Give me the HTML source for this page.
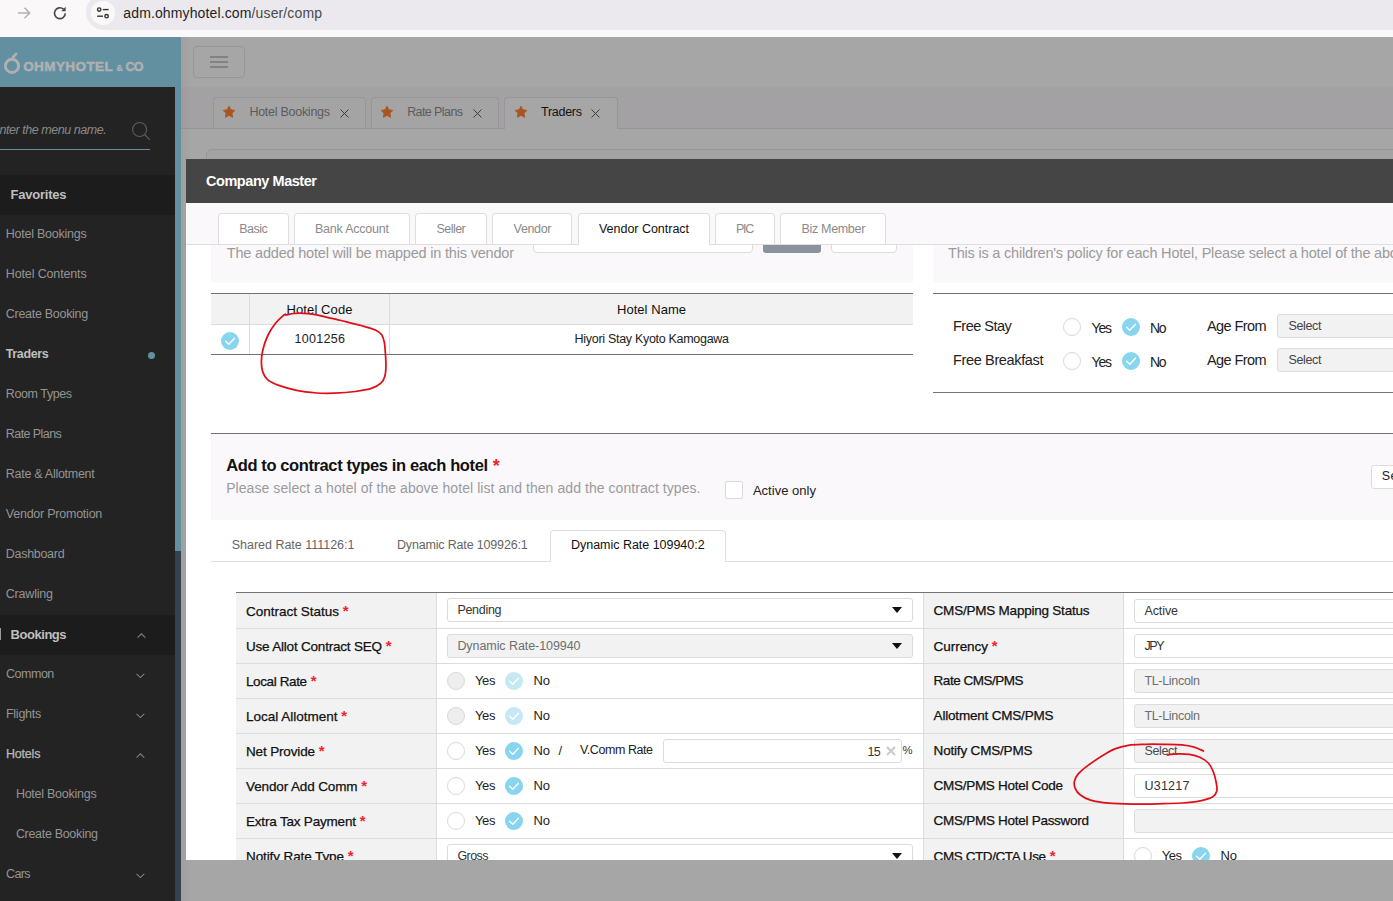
<!DOCTYPE html>
<html lang="en"><head><meta charset="utf-8"><title>Company Master</title>
<style>
html,body{margin:0;padding:0;}
body{width:1393px;height:901px;overflow:hidden;position:relative;background:#a6a6a6;font-family:"Liberation Sans",sans-serif;}
.b{position:absolute;box-sizing:border-box;}
.t{position:absolute;white-space:nowrap;}
svg{position:absolute;overflow:visible;}
</style></head><body>
<div class="b" style="left:181px;top:37px;width:1212px;height:50px;background:#a6a6a6;"></div>
<div class="b" style="left:181px;top:87px;width:1212px;height:41px;background:#a3a1a3;"></div>
<div class="b" style="left:181px;top:128px;width:1212px;height:1px;background:#979597;"></div>
<div class="b" style="left:181px;top:129px;width:1212px;height:772px;background:#a6a6a6;"></div>
<div class="b" style="left:181px;top:37px;width:11px;height:864px;background:linear-gradient(90deg,rgba(0,0,0,.04),rgba(0,0,0,0));"></div>
<div class="b" style="left:193px;top:46px;width:52px;height:32px;border:1px solid #969696;border-radius:4px;"></div>
<div class="b" style="left:210px;top:56px;width:18px;height:2px;background:#828282;"></div>
<div class="b" style="left:210px;top:61px;width:18px;height:2px;background:#828282;"></div>
<div class="b" style="left:210px;top:66px;width:18px;height:2px;background:#828282;"></div>
<div class="b" style="left:213px;top:97px;width:153px;height:31px;background:#a5a4a5;border:1px solid #979597;border-radius:4px 4px 0 0;border-bottom:none;"></div>
<svg style="left:222.29999999999998px;top:105px" width="14" height="14" viewBox="0 0 24 24"><path d="M12 2l3.09 6.26L22 9.27l-5 4.87 1.18 6.88L12 17.77l-6.18 3.25L7 14.14 2 9.27l6.91-1.01z" fill="#a8561f" stroke="#a8561f" stroke-width="1.6" stroke-linejoin="round"/></svg>
<span class="t" style="top:101.8px;font-size:12.5px;line-height:20px;color:#5b5b5b;left:249.4px;letter-spacing:-0.267px;">Hotel Bookings</span>
<svg style="left:339.5px;top:108.500px" width="9" height="9" viewBox="0 0 9 9"><path d="M0.500 0.500L8.500 8.500M8.500 0.500L0.500 8.500" stroke="#3d3d3d" stroke-width="1" fill="none"/></svg>
<div class="b" style="left:371px;top:97px;width:128px;height:31px;background:#a5a4a5;border:1px solid #979597;border-radius:4px 4px 0 0;border-bottom:none;"></div>
<svg style="left:380.2px;top:105px" width="14" height="14" viewBox="0 0 24 24"><path d="M12 2l3.09 6.26L22 9.27l-5 4.87 1.18 6.88L12 17.77l-6.18 3.25L7 14.14 2 9.27l6.91-1.01z" fill="#a8561f" stroke="#a8561f" stroke-width="1.6" stroke-linejoin="round"/></svg>
<span class="t" style="top:101.8px;font-size:12.5px;line-height:20px;color:#5b5b5b;left:407.2px;letter-spacing:-0.594px;">Rate Plans</span>
<svg style="left:472.5px;top:108.500px" width="9" height="9" viewBox="0 0 9 9"><path d="M0.500 0.500L8.500 8.500M8.500 0.500L0.500 8.500" stroke="#3d3d3d" stroke-width="1" fill="none"/></svg>
<div class="b" style="left:504px;top:97px;width:114px;height:32px;background:#a6a6a6;border:1px solid #979597;border-radius:4px 4px 0 0;border-bottom:none;"></div>
<svg style="left:513.5px;top:105px" width="14" height="14" viewBox="0 0 24 24"><path d="M12 2l3.09 6.26L22 9.27l-5 4.87 1.18 6.88L12 17.77l-6.18 3.25L7 14.14 2 9.27l6.91-1.01z" fill="#a8561f" stroke="#a8561f" stroke-width="1.6" stroke-linejoin="round"/></svg>
<span class="t" style="top:101.8px;font-size:12.5px;line-height:20px;color:#111;left:541.0px;letter-spacing:-0.267px;">Traders</span>
<svg style="left:591.3px;top:108.500px" width="9" height="9" viewBox="0 0 9 9"><path d="M0.500 0.500L8.500 8.500M8.500 0.500L0.500 8.500" stroke="#3d3d3d" stroke-width="1" fill="none"/></svg>
<div class="b" style="left:206px;top:149px;width:1294px;height:51px;background:#a4a2a4;border:1px solid #979597;border-radius:6px;"></div>
<div class="b" style="left:0px;top:0px;width:1393px;height:37px;background:#fbf8fa;"></div>
<div class="b" style="left:86px;top:-6px;width:1414px;height:36px;background:#ebe9ee;border-radius:18px;"></div>
<div class="b" style="left:91px;top:1px;width:23.5px;height:23.5px;background:#fbf8fa;border-radius:50%;"></div>
<svg style="left:17px;top:6px" width="14" height="14" viewBox="0 0 14 14"><path d="M1 7H12.500M7.500 1.800L12.700 7L7.500 12.200" stroke="#b3b1b4" stroke-width="1.500" fill="none"/></svg>
<svg style="left:52px;top:5px" width="16" height="16" viewBox="0 0 16 16"><path d="M13.300 8.400A5.400 5.400 0 1 1 11.500 4.200" stroke="#474747" stroke-width="1.600" fill="none"/><path d="M13.600 1.800V6.200H9.200z" fill="#474747"/></svg>
<svg style="left:96px;top:6px" width="14" height="14" viewBox="0 0 14 14"><circle cx="3.200" cy="3.600" r="1.700" stroke="#333" stroke-width="1.400" fill="none"/><path d="M6.800 3.600H12.600" stroke="#333" stroke-width="1.400"/><circle cx="10.600" cy="10.200" r="1.700" stroke="#333" stroke-width="1.400" fill="none"/><path d="M1.200 10.200H7" stroke="#333" stroke-width="1.400"/></svg>
<span class="t" style="top:2.2px;font-size:14px;line-height:22px;color:#1f1f1f;left:123.3px;letter-spacing:0.130px;">adm.ohmyhotel.com<span style="color:#4a4a4a">/user/comp</span></span>
<div class="b" style="left:0px;top:37px;width:181px;height:864px;background:#6290a1;"></div>
<div class="b" style="left:175px;top:551px;width:6px;height:350px;background:#33434b;"></div>
<div class="b" style="left:0px;top:87px;width:175px;height:814px;background:#232323;"></div>
<div class="b" style="left:0px;top:175px;width:175px;height:40px;background:#1c1c1c;"></div>
<div class="b" style="left:0px;top:615px;width:175px;height:40px;background:#1c1c1c;"></div>
<div class="b" style="left:0px;top:627.5px;width:1px;height:12.0px;background:#9a9a9a;"></div>
<svg style="left:0px;top:48px" width="30" height="30" viewBox="0 0 30 30"><circle cx="12" cy="17.900" r="6.600" stroke="#b1b0b1" stroke-width="2.900" fill="none"/><path d="M12.500 11.300C12.900 9.200 14 7.400 16.200 5.900" stroke="#b1b0b1" stroke-width="2.700" fill="none" stroke-linecap="round"/></svg>
<span class="t" style="top:55.6px;font-size:13.5px;line-height:22px;color:#b1b0b1;left:23.2px;letter-spacing:0.419px;font-weight:bold;-webkit-text-stroke:0.500px #b1b0b1;">OHMYHOTEL</span>
<span class="t" style="top:60.5px;font-size:9px;line-height:14px;color:#b1b0b1;left:116.2px;letter-spacing:-0.100px;font-weight:bold;-webkit-text-stroke:0.300px #b1b0b1;">&amp;</span>
<span class="t" style="top:56.6px;font-size:12.5px;line-height:20px;color:#b1b0b1;left:125.4px;letter-spacing:-0.750px;font-weight:bold;-webkit-text-stroke:0.500px #b1b0b1;">CO</span>
<span class="t" style="top:120.3px;font-size:12.5px;line-height:20px;color:#8a8a8a;left:-8.4px;font-style:italic;letter-spacing:-0.446px;">Enter the menu name.</span>
<div class="b" style="left:0px;top:149px;width:150px;height:1px;background:#6290a1;"></div>
<svg style="left:130px;top:120px" width="22" height="22" viewBox="0 0 22 22"><circle cx="9.600" cy="9.500" r="7" stroke="#5e5e5e" stroke-width="1.100" fill="none"/><path d="M14.600 14.500L20 19.900" stroke="#5e5e5e" stroke-width="1.100"/></svg>
<span class="t" style="top:184.2px;font-size:13px;line-height:21px;color:#bfbfbf;left:10.5px;letter-spacing:-0.213px;font-weight:bold;">Favorites</span>
<span class="t" style="top:224.0px;font-size:12.5px;line-height:20px;color:#959595;left:5.8px;letter-spacing:-0.244px;">Hotel Bookings</span>
<span class="t" style="top:264.0px;font-size:12.5px;line-height:20px;color:#959595;left:5.8px;letter-spacing:-0.137px;">Hotel Contents</span>
<span class="t" style="top:304.0px;font-size:12.5px;line-height:20px;color:#959595;left:5.8px;letter-spacing:-0.289px;">Create Booking</span>
<span class="t" style="top:344.0px;font-size:12.5px;line-height:20px;color:#bfbfbf;left:5.8px;letter-spacing:-0.377px;font-weight:bold;">Traders</span>
<span class="t" style="top:384.0px;font-size:12.5px;line-height:20px;color:#959595;left:5.8px;letter-spacing:-0.404px;">Room Types</span>
<span class="t" style="top:424.0px;font-size:12.5px;line-height:20px;color:#959595;left:5.8px;letter-spacing:-0.571px;">Rate Plans</span>
<span class="t" style="top:464.0px;font-size:12.5px;line-height:20px;color:#959595;left:5.8px;letter-spacing:-0.280px;">Rate &amp; Allotment</span>
<span class="t" style="top:504.0px;font-size:12.5px;line-height:20px;color:#959595;left:5.8px;letter-spacing:-0.237px;">Vendor Promotion</span>
<span class="t" style="top:544.0px;font-size:12.5px;line-height:20px;color:#959595;left:5.8px;letter-spacing:-0.293px;">Dashboard</span>
<span class="t" style="top:584.0px;font-size:12.5px;line-height:20px;color:#959595;left:5.8px;letter-spacing:-0.204px;">Crawling</span>
<div class="b" style="left:148px;top:352px;width:7px;height:7px;background:#6290a1;border-radius:50%;"></div>
<span class="t" style="top:624.3px;font-size:13px;line-height:21px;color:#bfbfbf;left:10.5px;letter-spacing:-0.447px;font-weight:bold;">Bookings</span>
<svg style="left:136.6px;top:632.8px" width="8.800" height="5.400" viewBox="0 0 8.800 5.400"><path d="M0.500 4.600L4.400 0.800L8.300 4.600" stroke="#808080" stroke-width="1.100" fill="none"/></svg>
<span class="t" style="top:664.2px;font-size:12.5px;line-height:20px;color:#959595;left:6.0px;letter-spacing:-0.481px;">Common</span>
<svg style="left:136.29999999999998px;top:672.8px" width="8.800" height="5.400" viewBox="0 0 8.800 5.400"><path d="M0.500 0.800L4.400 4.600L8.300 0.800" stroke="#808080" stroke-width="1.100" fill="none"/></svg>
<span class="t" style="top:704.2px;font-size:12.5px;line-height:20px;color:#959595;left:6.0px;letter-spacing:-0.269px;">Flights</span>
<svg style="left:136.29999999999998px;top:712.8px" width="8.800" height="5.400" viewBox="0 0 8.800 5.400"><path d="M0.500 0.800L4.400 4.600L8.300 0.800" stroke="#808080" stroke-width="1.100" fill="none"/></svg>
<span class="t" style="top:744.2px;font-size:12.5px;line-height:20px;color:#b8b8b8;left:6.0px;letter-spacing:-0.206px;-webkit-text-stroke:0.250px #b8b8b8;">Hotels</span>
<svg style="left:136.29999999999998px;top:753.0999999999999px" width="8.800" height="5.400" viewBox="0 0 8.800 5.400"><path d="M0.500 4.600L4.400 0.800L8.300 4.600" stroke="#808080" stroke-width="1.100" fill="none"/></svg>
<span class="t" style="top:784.2px;font-size:12.5px;line-height:20px;color:#959595;left:15.9px;letter-spacing:-0.252px;">Hotel Bookings</span>
<span class="t" style="top:824.2px;font-size:12.5px;line-height:20px;color:#959595;left:15.9px;letter-spacing:-0.312px;">Create Booking</span>
<span class="t" style="top:864.2px;font-size:12.5px;line-height:20px;color:#959595;left:6.0px;letter-spacing:-0.597px;">Cars</span>
<svg style="left:136.29999999999998px;top:872.8px" width="8.800" height="5.400" viewBox="0 0 8.800 5.400"><path d="M0.500 0.800L4.400 4.600L8.300 0.800" stroke="#808080" stroke-width="1.100" fill="none"/></svg>
<div class="b" style="left:186px;top:159px;width:1207px;height:701px;background:#ffffff;"></div>
<div class="b" style="left:186px;top:159px;width:1207px;height:44px;background:#454545;"></div>
<span class="t" style="top:169.8px;font-size:14.5px;line-height:23px;color:#ffffff;left:206.0px;letter-spacing:-0.449px;font-weight:bold;">Company Master</span>
<div class="b" style="left:211px;top:244px;width:702px;height:39px;background:#faf8fb;"></div>
<div class="b" style="left:933px;top:244px;width:460px;height:39px;background:#faf8fb;"></div>
<span class="t" style="top:241.5px;font-size:14.5px;line-height:23px;color:#9b9b9b;left:226.8px;letter-spacing:-0.196px;">The added hotel will be mapped in this vendor</span>
<span class="t" style="top:241.5px;font-size:14.5px;line-height:23px;color:#9b9b9b;left:948.0px;letter-spacing:-0.196px;">This is a children's policy for each Hotel, Please select a hotel of the above hotel list.</span>
<div class="b" style="left:533px;top:236px;width:220px;height:17px;background:#fff;border:1px solid #dcdcdc;border-radius:4px;"></div>
<div class="b" style="left:763px;top:236px;width:58px;height:17px;background:#8a929c;border-radius:3px;"></div>
<div class="b" style="left:831px;top:236px;width:66px;height:17px;background:#fff;border:1px solid #dcdcdc;border-radius:4px;"></div>
<div class="b" style="left:186px;top:203px;width:1207px;height:42px;background:#faf8fb;border-bottom:1px solid #dedede;"></div>
<div class="b" style="left:218px;top:213px;width:71px;height:31px;background:#fff;border:1px solid #dedede;border-radius:4px 4px 0 0;border-bottom:none;"></div>
<span class="t" style="top:219.0px;font-size:12.5px;line-height:20px;color:#8a8a8a;left:239.3px;letter-spacing:-0.517px;">Basic</span>
<div class="b" style="left:294px;top:213px;width:116px;height:31px;background:#fff;border:1px solid #dedede;border-radius:4px 4px 0 0;border-bottom:none;"></div>
<span class="t" style="top:219.0px;font-size:12.5px;line-height:20px;color:#8a8a8a;left:315.0px;letter-spacing:-0.222px;">Bank Account</span>
<div class="b" style="left:415px;top:213px;width:72px;height:31px;background:#fff;border:1px solid #dedede;border-radius:4px 4px 0 0;border-bottom:none;"></div>
<span class="t" style="top:219.0px;font-size:12.5px;line-height:20px;color:#8a8a8a;left:436.6px;letter-spacing:-0.571px;">Seller</span>
<div class="b" style="left:492px;top:213px;width:80px;height:31px;background:#fff;border:1px solid #dedede;border-radius:4px 4px 0 0;border-bottom:none;"></div>
<span class="t" style="top:219.0px;font-size:12.5px;line-height:20px;color:#8a8a8a;left:513.6px;letter-spacing:-0.343px;">Vendor</span>
<div class="b" style="left:578px;top:213px;width:132px;height:32px;background:#fff;border:1px solid #dedede;border-radius:4px 4px 0 0;border-bottom:none;"></div>
<span class="t" style="top:219.0px;font-size:12.5px;line-height:20px;color:#111;left:599.0px;letter-spacing:-0.023px;">Vendor Contract</span>
<div class="b" style="left:715px;top:213px;width:60px;height:31px;background:#fff;border:1px solid #dedede;border-radius:4px 4px 0 0;border-bottom:none;"></div>
<span class="t" style="top:219.0px;font-size:12.5px;line-height:20px;color:#8a8a8a;left:736.0px;letter-spacing:-1.269px;">PIC</span>
<div class="b" style="left:780px;top:213px;width:106px;height:31px;background:#fff;border:1px solid #dedede;border-radius:4px 4px 0 0;border-bottom:none;"></div>
<span class="t" style="top:219.0px;font-size:12.5px;line-height:20px;color:#8a8a8a;left:801.5px;letter-spacing:-0.320px;">Biz Member</span>
<div class="b" style="left:211px;top:293px;width:702px;height:1px;background:#737373;"></div>
<div class="b" style="left:211px;top:294px;width:702px;height:30px;background:#f2f2f2;"></div>
<div class="b" style="left:211px;top:324px;width:702px;height:1px;background:#dcdcdc;"></div>
<div class="b" style="left:211px;top:354px;width:702px;height:1px;background:#737373;"></div>
<div class="b" style="left:249px;top:294px;width:1px;height:60px;background:#dcdcdc;"></div>
<div class="b" style="left:389px;top:294px;width:1px;height:60px;background:#dcdcdc;"></div>
<span class="t" style="top:298.8px;font-size:13px;line-height:21px;color:#111;left:286.5px;letter-spacing:0.107px;">Hotel Code</span>
<span class="t" style="top:298.8px;font-size:13px;line-height:21px;color:#111;left:617.0px;letter-spacing:0.040px;">Hotel Name</span>
<span class="t" style="top:329.0px;font-size:12.5px;line-height:20px;color:#222;left:294.6px;letter-spacing:0.290px;">1001256</span>
<span class="t" style="top:329.0px;font-size:12.5px;line-height:20px;color:#222;left:574.6px;letter-spacing:-0.299px;">Hiyori Stay Kyoto Kamogawa</span>
<svg style="left:220.9px;top:331.7px" width="18" height="18" viewBox="0 0 18 18"><circle cx="9" cy="9" r="9" fill="#87d5ee"/><path d="M4.600 9.200L7.800 12.300L13.500 6.300" stroke="#fff" stroke-width="1.350" fill="none" stroke-linecap="round" stroke-linejoin="round"/></svg>
<div class="b" style="left:933px;top:293px;width:460px;height:1px;background:#737373;"></div>
<div class="b" style="left:933px;top:392px;width:460px;height:1px;background:#737373;"></div>
<span class="t" style="top:314.8px;font-size:14.5px;line-height:23px;color:#222;left:953.0px;letter-spacing:-0.520px;">Free Stay</span>
<svg style="left:1062.8px;top:317.8px" width="18" height="18" viewBox="0 0 18 18"><circle cx="9" cy="9" r="8.500" fill="#ffffff" stroke="#d9d9d9" stroke-width="1"/></svg>
<span class="t" style="top:316.5px;font-size:14px;line-height:22px;color:#222;left:1091.5px;letter-spacing:-1.170px;">Yes</span>
<svg style="left:1121.9px;top:317.8px" width="18" height="18" viewBox="0 0 18 18"><circle cx="9" cy="9" r="9" fill="#87d5ee"/><path d="M4.600 9.200L7.800 12.300L13.500 6.300" stroke="#fff" stroke-width="1.350" fill="none" stroke-linecap="round" stroke-linejoin="round"/></svg>
<span class="t" style="top:316.5px;font-size:14px;line-height:22px;color:#222;left:1150.0px;letter-spacing:-1.398px;">No</span>
<span class="t" style="top:314.8px;font-size:14.5px;line-height:23px;color:#222;left:1207.0px;letter-spacing:-0.594px;">Age From</span>
<div class="b" style="left:1277px;top:314px;width:223px;height:24px;background:#f2f2f2;border:1px solid #dcdcdc;border-radius:3px;"></div>
<span class="t" style="top:315.8px;font-size:12.5px;line-height:20px;color:#444;left:1288.4px;letter-spacing:-0.328px;">Select</span>
<span class="t" style="top:348.8px;font-size:14.5px;line-height:23px;color:#222;left:953.0px;letter-spacing:-0.354px;">Free Breakfast</span>
<svg style="left:1062.8px;top:351.8px" width="18" height="18" viewBox="0 0 18 18"><circle cx="9" cy="9" r="8.500" fill="#ffffff" stroke="#d9d9d9" stroke-width="1"/></svg>
<span class="t" style="top:350.5px;font-size:14px;line-height:22px;color:#222;left:1091.5px;letter-spacing:-1.170px;">Yes</span>
<svg style="left:1121.9px;top:351.8px" width="18" height="18" viewBox="0 0 18 18"><circle cx="9" cy="9" r="9" fill="#87d5ee"/><path d="M4.600 9.200L7.800 12.300L13.500 6.300" stroke="#fff" stroke-width="1.350" fill="none" stroke-linecap="round" stroke-linejoin="round"/></svg>
<span class="t" style="top:350.5px;font-size:14px;line-height:22px;color:#222;left:1150.0px;letter-spacing:-1.398px;">No</span>
<span class="t" style="top:348.8px;font-size:14.5px;line-height:23px;color:#222;left:1207.0px;letter-spacing:-0.594px;">Age From</span>
<div class="b" style="left:1277px;top:348px;width:223px;height:24px;background:#f2f2f2;border:1px solid #dcdcdc;border-radius:3px;"></div>
<span class="t" style="top:349.8px;font-size:12.5px;line-height:20px;color:#444;left:1288.4px;letter-spacing:-0.328px;">Select</span>
<div class="b" style="left:211px;top:433px;width:1182px;height:1px;background:#737373;"></div>
<div class="b" style="left:211px;top:434px;width:1182px;height:86px;background:#faf8fb;"></div>
<span class="t" style="top:452.3px;font-size:16.5px;line-height:26px;color:#111;left:226.2px;letter-spacing:-0.389px;font-weight:bold;">Add to contract types in each hotel</span>
<span class="t" style="top:452.0px;font-size:18px;line-height:29px;color:#f0222c;left:492.8px;font-weight:bold;">*</span>
<span class="t" style="top:476.8px;font-size:14px;line-height:22px;color:#9b9b9b;left:226.2px;letter-spacing:0.065px;">Please select a hotel of the above hotel list and then add the contract types.</span>
<div class="b" style="left:725px;top:481px;width:18px;height:18px;background:#fff;border:1px solid #dadada;border-radius:2px;"></div>
<span class="t" style="top:480.4px;font-size:13px;line-height:21px;color:#222;left:752.9px;letter-spacing:0.024px;">Active only</span>
<div class="b" style="left:1371px;top:465px;width:129px;height:24px;background:#fff;border:1px solid #dcdcdc;border-radius:3px;"></div>
<span class="t" style="top:466.4px;font-size:12.5px;line-height:20px;color:#222;left:1381.8px;letter-spacing:0.4px;">Se</span>
<div class="b" style="left:211px;top:561px;width:1182px;height:1px;background:#dedede;"></div>
<div class="b" style="left:550px;top:530px;width:176px;height:32px;background:#fff;border:1px solid #dedede;border-radius:4px 4px 0 0;border-bottom:none;"></div>
<span class="t" style="top:534.6px;font-size:12.5px;line-height:20px;color:#666;left:231.8px;letter-spacing:-0.021px;">Shared Rate 111126:1</span>
<span class="t" style="top:534.6px;font-size:12.5px;line-height:20px;color:#666;left:397.0px;letter-spacing:-0.170px;">Dynamic Rate 109926:1</span>
<span class="t" style="top:534.6px;font-size:12.5px;line-height:20px;color:#111;left:571.0px;letter-spacing:-0.025px;">Dynamic Rate 109940:2</span>
<div class="b" style="left:236px;top:592px;width:1157px;height:1px;background:#737373;"></div>
<div class="b" style="left:236px;top:593px;width:201px;height:267px;background:#f2f2f2;border-right:1px solid #dcdcdc;"></div>
<div class="b" style="left:923px;top:593px;width:201px;height:267px;background:#f2f2f2;border-right:1px solid #dcdcdc;border-left:1px solid #dcdcdc;"></div>
<div class="b" style="left:236px;top:628px;width:1157px;height:1px;background:#dcdcdc;"></div>
<div class="b" style="left:236px;top:663px;width:1157px;height:1px;background:#dcdcdc;"></div>
<div class="b" style="left:236px;top:698px;width:1157px;height:1px;background:#dcdcdc;"></div>
<div class="b" style="left:236px;top:733px;width:1157px;height:1px;background:#dcdcdc;"></div>
<div class="b" style="left:236px;top:768px;width:1157px;height:1px;background:#dcdcdc;"></div>
<div class="b" style="left:236px;top:803px;width:1157px;height:1px;background:#dcdcdc;"></div>
<div class="b" style="left:236px;top:838px;width:1157px;height:1px;background:#dcdcdc;"></div>
<span class="t" style="top:600.5px;font-size:13.5px;line-height:22px;color:#111;left:246.0px;letter-spacing:-0.003px;-webkit-text-stroke:0.250px #111;">Contract Status</span>
<span class="t" style="top:599.3px;font-size:15px;line-height:24px;color:#f5222d;left:342.8px;font-weight:bold;">*</span>
<span class="t" style="top:635.5px;font-size:13.5px;line-height:22px;color:#111;left:246.0px;letter-spacing:-0.205px;-webkit-text-stroke:0.250px #111;">Use Allot Contract SEQ</span>
<span class="t" style="top:634.3px;font-size:15px;line-height:24px;color:#f5222d;left:385.8px;font-weight:bold;">*</span>
<span class="t" style="top:670.5px;font-size:13.5px;line-height:22px;color:#111;left:246.0px;letter-spacing:-0.393px;-webkit-text-stroke:0.250px #111;">Local Rate</span>
<span class="t" style="top:669.3px;font-size:15px;line-height:24px;color:#f5222d;left:310.8px;font-weight:bold;">*</span>
<span class="t" style="top:705.5px;font-size:13.5px;line-height:22px;color:#111;left:246.0px;letter-spacing:-0.004px;-webkit-text-stroke:0.250px #111;">Local Allotment</span>
<span class="t" style="top:704.3px;font-size:15px;line-height:24px;color:#f5222d;left:341.3px;font-weight:bold;">*</span>
<span class="t" style="top:740.5px;font-size:13.5px;line-height:22px;color:#111;left:246.0px;letter-spacing:-0.153px;-webkit-text-stroke:0.250px #111;">Net Provide</span>
<span class="t" style="top:739.3px;font-size:15px;line-height:24px;color:#f5222d;left:318.8px;font-weight:bold;">*</span>
<span class="t" style="top:775.5px;font-size:13.5px;line-height:22px;color:#111;left:246.0px;letter-spacing:-0.129px;-webkit-text-stroke:0.250px #111;">Vendor Add Comm</span>
<span class="t" style="top:774.3px;font-size:15px;line-height:24px;color:#f5222d;left:361.3px;font-weight:bold;">*</span>
<span class="t" style="top:810.5px;font-size:13.5px;line-height:22px;color:#111;left:246.0px;letter-spacing:-0.190px;-webkit-text-stroke:0.250px #111;">Extra Tax Payment</span>
<span class="t" style="top:809.3px;font-size:15px;line-height:24px;color:#f5222d;left:359.8px;font-weight:bold;">*</span>
<span class="t" style="top:845.5px;font-size:13.5px;line-height:22px;color:#111;left:246.0px;letter-spacing:-0.103px;-webkit-text-stroke:0.250px #111;">Notify Rate Type</span>
<span class="t" style="top:844.3px;font-size:15px;line-height:24px;color:#f5222d;left:347.8px;font-weight:bold;">*</span>
<span class="t" style="top:599.6px;font-size:13.5px;line-height:22px;color:#111;left:933.6px;letter-spacing:-0.222px;-webkit-text-stroke:0.250px #111;">CMS/PMS Mapping Status</span>
<span class="t" style="top:635.5px;font-size:13.5px;line-height:22px;color:#111;left:933.6px;letter-spacing:-0.052px;-webkit-text-stroke:0.250px #111;">Currency</span>
<span class="t" style="top:634.3px;font-size:15px;line-height:24px;color:#f5222d;left:991.8px;font-weight:bold;">*</span>
<span class="t" style="top:669.6px;font-size:13.5px;line-height:22px;color:#111;left:933.6px;letter-spacing:-0.488px;-webkit-text-stroke:0.250px #111;">Rate CMS/PMS</span>
<span class="t" style="top:704.6px;font-size:13.5px;line-height:22px;color:#111;left:933.6px;letter-spacing:-0.195px;-webkit-text-stroke:0.250px #111;">Allotment CMS/PMS</span>
<span class="t" style="top:739.6px;font-size:13.5px;line-height:22px;color:#111;left:933.6px;letter-spacing:-0.182px;-webkit-text-stroke:0.250px #111;">Notify CMS/PMS</span>
<span class="t" style="top:774.6px;font-size:13.5px;line-height:22px;color:#111;left:933.6px;letter-spacing:-0.288px;-webkit-text-stroke:0.250px #111;">CMS/PMS Hotel Code</span>
<span class="t" style="top:809.6px;font-size:13.5px;line-height:22px;color:#111;left:933.6px;letter-spacing:-0.281px;-webkit-text-stroke:0.250px #111;">CMS/PMS Hotel Password</span>
<span class="t" style="top:845.5px;font-size:13.5px;line-height:22px;color:#111;left:933.6px;letter-spacing:-0.418px;-webkit-text-stroke:0.250px #111;">CMS CTD/CTA Use</span>
<span class="t" style="top:844.3px;font-size:15px;line-height:24px;color:#f5222d;left:1049.8px;font-weight:bold;">*</span>
<div class="b" style="left:447px;top:598px;width:466px;height:24px;background:#fff;border:1px solid #dcdcdc;border-radius:3px;"></div>
<span class="t" style="top:600.4px;font-size:12.5px;line-height:20px;color:#333;left:457.4px;letter-spacing:-0.295px;">Pending</span>
<svg style="left:892px;top:607px" width="10" height="6" viewBox="0 0 10 6"><path d="M0 0H10L5 6z" fill="#111"/></svg>
<div class="b" style="left:447px;top:634px;width:466px;height:24px;background:#f2f2f2;border:1px solid #dcdcdc;border-radius:3px;"></div>
<span class="t" style="top:636.4px;font-size:12.5px;line-height:20px;color:#6e6e6e;left:457.4px;letter-spacing:-0.070px;">Dynamic Rate-109940</span>
<svg style="left:892px;top:643px" width="10" height="6" viewBox="0 0 10 6"><path d="M0 0H10L5 6z" fill="#111"/></svg>
<div class="b" style="left:447px;top:844px;width:466px;height:24px;background:#fff;border:1px solid #dcdcdc;border-radius:3px;"></div>
<span class="t" style="top:846.4px;font-size:12.5px;line-height:20px;color:#333;left:457.4px;letter-spacing:-0.559px;">Gross</span>
<svg style="left:892px;top:853px" width="10" height="6" viewBox="0 0 10 6"><path d="M0 0H10L5 6z" fill="#111"/></svg>
<svg style="left:447px;top:671.5px" width="18" height="18" viewBox="0 0 18 18"><circle cx="9" cy="9" r="8.500" fill="#eeeeee" stroke="#d9d9d9" stroke-width="1"/></svg>
<span class="t" style="top:670.0px;font-size:13px;line-height:21px;color:#222;left:475.0px;letter-spacing:-0.354px;">Yes</span>
<svg style="left:505px;top:671.5px" width="18" height="18" viewBox="0 0 18 18"><circle cx="9" cy="9" r="9" fill="#c4e9f5"/><path d="M4.600 9.200L7.800 12.300L13.500 6.300" stroke="#fff" stroke-width="1.350" fill="none" stroke-linecap="round" stroke-linejoin="round"/></svg>
<span class="t" style="top:670.0px;font-size:13px;line-height:21px;color:#222;left:533.4px;letter-spacing:-0.019px;">No</span>
<svg style="left:447px;top:706.5px" width="18" height="18" viewBox="0 0 18 18"><circle cx="9" cy="9" r="8.500" fill="#eeeeee" stroke="#d9d9d9" stroke-width="1"/></svg>
<span class="t" style="top:705.0px;font-size:13px;line-height:21px;color:#222;left:475.0px;letter-spacing:-0.354px;">Yes</span>
<svg style="left:505px;top:706.5px" width="18" height="18" viewBox="0 0 18 18"><circle cx="9" cy="9" r="9" fill="#c4e9f5"/><path d="M4.600 9.200L7.800 12.300L13.500 6.300" stroke="#fff" stroke-width="1.350" fill="none" stroke-linecap="round" stroke-linejoin="round"/></svg>
<span class="t" style="top:705.0px;font-size:13px;line-height:21px;color:#222;left:533.4px;letter-spacing:-0.019px;">No</span>
<svg style="left:447px;top:741.5px" width="18" height="18" viewBox="0 0 18 18"><circle cx="9" cy="9" r="8.500" fill="#ffffff" stroke="#d9d9d9" stroke-width="1"/></svg>
<span class="t" style="top:740.0px;font-size:13px;line-height:21px;color:#222;left:475.0px;letter-spacing:-0.354px;">Yes</span>
<svg style="left:505px;top:741.5px" width="18" height="18" viewBox="0 0 18 18"><circle cx="9" cy="9" r="9" fill="#87d5ee"/><path d="M4.600 9.200L7.800 12.300L13.500 6.300" stroke="#fff" stroke-width="1.350" fill="none" stroke-linecap="round" stroke-linejoin="round"/></svg>
<span class="t" style="top:740.0px;font-size:13px;line-height:21px;color:#222;left:533.4px;letter-spacing:-0.019px;">No</span>
<svg style="left:447px;top:776.5px" width="18" height="18" viewBox="0 0 18 18"><circle cx="9" cy="9" r="8.500" fill="#ffffff" stroke="#d9d9d9" stroke-width="1"/></svg>
<span class="t" style="top:775.0px;font-size:13px;line-height:21px;color:#222;left:475.0px;letter-spacing:-0.354px;">Yes</span>
<svg style="left:505px;top:776.5px" width="18" height="18" viewBox="0 0 18 18"><circle cx="9" cy="9" r="9" fill="#87d5ee"/><path d="M4.600 9.200L7.800 12.300L13.500 6.300" stroke="#fff" stroke-width="1.350" fill="none" stroke-linecap="round" stroke-linejoin="round"/></svg>
<span class="t" style="top:775.0px;font-size:13px;line-height:21px;color:#222;left:533.4px;letter-spacing:-0.019px;">No</span>
<svg style="left:447px;top:811.5px" width="18" height="18" viewBox="0 0 18 18"><circle cx="9" cy="9" r="8.500" fill="#ffffff" stroke="#d9d9d9" stroke-width="1"/></svg>
<span class="t" style="top:810.0px;font-size:13px;line-height:21px;color:#222;left:475.0px;letter-spacing:-0.354px;">Yes</span>
<svg style="left:505px;top:811.5px" width="18" height="18" viewBox="0 0 18 18"><circle cx="9" cy="9" r="9" fill="#87d5ee"/><path d="M4.600 9.200L7.800 12.300L13.500 6.300" stroke="#fff" stroke-width="1.350" fill="none" stroke-linecap="round" stroke-linejoin="round"/></svg>
<span class="t" style="top:810.0px;font-size:13px;line-height:21px;color:#222;left:533.4px;letter-spacing:-0.019px;">No</span>
<span class="t" style="top:740.0px;font-size:13px;line-height:21px;color:#222;left:558.5px;">/</span>
<span class="t" style="top:740.0px;font-size:12.5px;line-height:20px;color:#222;left:580.0px;letter-spacing:-0.434px;">V.Comm Rate</span>
<div class="b" style="left:663px;top:739px;width:239px;height:24px;background:#fff;border:1px solid #dcdcdc;border-radius:3px;"></div>
<span class="t" style="top:741.5px;font-size:12.5px;line-height:20px;color:#333;left:867.5px;letter-spacing:-0.602px;">15</span>
<svg style="left:886px;top:746px" width="10" height="10" viewBox="0 0 10 10"><path d="M1 1L9 9M9 1L1 9" stroke="#c9c9c9" stroke-width="2" fill="none"/></svg>
<span class="t" style="top:740.9px;font-size:11.3px;line-height:18px;color:#333;left:902.6px;letter-spacing:-0.3px;">%</span>
<div class="b" style="left:1134px;top:599px;width:366px;height:24px;background:#fff;border:1px solid #dcdcdc;border-radius:3px;"></div>
<span class="t" style="top:601.4px;font-size:12.5px;line-height:20px;color:#333;left:1144.4px;letter-spacing:-0.088px;">Active</span>
<div class="b" style="left:1134px;top:634px;width:366px;height:24px;background:#fff;border:1px solid #dcdcdc;border-radius:3px;"></div>
<span class="t" style="top:636.4px;font-size:12.5px;line-height:20px;color:#333;left:1144.4px;letter-spacing:-1.413px;">JPY</span>
<div class="b" style="left:1134px;top:669px;width:366px;height:24px;background:#f2f2f2;border:1px solid #dcdcdc;border-radius:3px;"></div>
<span class="t" style="top:671.4px;font-size:12.5px;line-height:20px;color:#6e6e6e;left:1144.4px;letter-spacing:-0.306px;">TL-Lincoln</span>
<div class="b" style="left:1134px;top:704px;width:366px;height:24px;background:#f2f2f2;border:1px solid #dcdcdc;border-radius:3px;"></div>
<span class="t" style="top:706.4px;font-size:12.5px;line-height:20px;color:#6e6e6e;left:1144.4px;letter-spacing:-0.306px;">TL-Lincoln</span>
<div class="b" style="left:1134px;top:739px;width:366px;height:24px;background:#f2f2f2;border:1px solid #dcdcdc;border-radius:3px;"></div>
<span class="t" style="top:741.4px;font-size:12.5px;line-height:20px;color:#4a4a4a;left:1144.4px;letter-spacing:-0.328px;">Select</span>
<div class="b" style="left:1134px;top:774px;width:366px;height:24px;background:#fff;border:1px solid #dcdcdc;border-radius:3px;"></div>
<span class="t" style="top:776.4px;font-size:12.5px;line-height:20px;color:#333;left:1144.4px;letter-spacing:0.263px;">U31217</span>
<div class="b" style="left:1134px;top:809px;width:366px;height:24px;background:#f2f2f2;border:1px solid #dcdcdc;border-radius:3px;"></div>
<svg style="left:1134px;top:846.5px" width="18" height="18" viewBox="0 0 18 18"><circle cx="9" cy="9" r="8.500" fill="#ffffff" stroke="#d9d9d9" stroke-width="1"/></svg>
<span class="t" style="top:845.0px;font-size:13px;line-height:21px;color:#222;left:1161.8px;letter-spacing:-0.504px;">Yes</span>
<svg style="left:1192px;top:846.5px" width="18" height="18" viewBox="0 0 18 18"><circle cx="9" cy="9" r="9" fill="#87d5ee"/><path d="M4.600 9.200L7.800 12.300L13.500 6.300" stroke="#fff" stroke-width="1.350" fill="none" stroke-linecap="round" stroke-linejoin="round"/></svg>
<span class="t" style="top:845.0px;font-size:13px;line-height:21px;color:#222;left:1220.6px;letter-spacing:-0.219px;">No</span>
<div class="b" style="left:181px;top:860px;width:1212px;height:41px;background:#a6a6a6;"></div>
<div class="b" style="left:181px;top:860px;width:11px;height:41px;background:linear-gradient(90deg,rgba(0,0,0,.04),rgba(0,0,0,0));"></div>
<svg style="left:0;top:0" width="1393" height="901" viewBox="0 0 1393 901"><path d="M285.5 314.2C285.1 314.4 285.0 314.0 283.3 315.5C281.6 317.0 278.1 320.0 275.5 323.3C272.9 326.6 269.9 331.1 267.8 335.5C265.7 339.9 263.9 345.6 262.8 350.0C261.7 354.4 261.4 358.4 261.4 362.1C261.4 365.8 261.7 369.1 262.8 372.1C263.9 375.1 265.1 377.7 267.8 379.9C270.5 382.1 274.0 383.6 278.8 385.4C283.6 387.1 290.3 389.1 296.6 390.4C302.9 391.7 310.3 392.5 316.6 393.0C322.9 393.5 327.8 393.4 334.3 393.2C340.8 392.9 349.1 392.3 355.4 391.5C361.7 390.7 367.8 389.6 372.0 388.2C376.2 386.8 378.8 385.1 380.9 383.2C383.0 381.3 384.0 379.4 384.8 376.6C385.6 373.8 385.8 370.5 385.9 366.6C386.0 362.7 385.7 357.4 385.4 353.3C385.1 349.2 384.9 345.4 384.3 342.2C383.7 339.0 383.0 336.4 381.5 334.4C380.0 332.4 378.8 331.5 375.4 330.0C372.0 328.5 366.7 327.1 361.0 325.5C355.3 323.9 347.5 322.1 341.0 320.5C334.5 318.9 326.9 317.2 322.1 316.1C317.3 315.0 315.2 314.6 312.1 314.1C309.0 313.6 306.2 313.4 303.3 313.3C300.4 313.2 297.4 313.2 294.4 313.5C291.4 313.8 287.0 314.8 285.5 315.0" stroke="#de0f18" stroke-width="1.750" fill="none" stroke-linecap="round" stroke-linejoin="round"/><path d="M1203.4 751.0C1201.9 750.4 1197.8 748.1 1194.2 747.1C1190.6 746.1 1187.1 745.4 1182.0 744.9C1176.9 744.4 1169.8 744.4 1163.7 744.3C1157.6 744.2 1151.3 744.1 1145.4 744.3C1139.5 744.5 1133.4 744.5 1128.3 745.3C1123.2 746.1 1119.4 747.1 1114.9 748.9C1110.4 750.7 1106.0 753.5 1101.5 756.2C1097.0 759.0 1092.0 762.5 1088.1 765.4C1084.2 768.3 1080.6 771.2 1078.3 773.9C1076.0 776.5 1074.9 778.8 1074.4 781.3C1073.9 783.8 1074.3 786.4 1075.3 788.6C1076.2 790.8 1077.6 792.8 1080.1 794.7C1082.6 796.6 1085.7 798.8 1090.5 800.2C1095.3 801.6 1101.7 802.6 1108.8 803.2C1115.9 803.9 1125.1 804.0 1133.2 804.1C1141.3 804.2 1149.5 804.0 1157.6 803.8C1165.7 803.6 1174.9 803.5 1182.0 803.0C1189.1 802.5 1195.2 801.8 1200.3 800.8C1205.4 799.8 1209.8 798.7 1212.5 797.1C1215.2 795.5 1216.2 793.4 1216.8 791.0C1217.4 788.6 1216.8 785.8 1216.2 782.5C1215.6 779.2 1214.5 774.8 1213.2 771.5C1211.9 768.2 1210.5 765.3 1208.3 763.0C1206.1 760.7 1203.4 758.9 1200.3 757.5C1197.2 756.1 1193.2 755.0 1189.4 754.4C1185.6 753.8 1180.9 753.7 1177.2 753.8C1173.5 753.9 1169.0 754.8 1167.4 755.0" stroke="#de0f18" stroke-width="1.750" fill="none" stroke-linecap="round" stroke-linejoin="round"/></svg>
</body></html>
